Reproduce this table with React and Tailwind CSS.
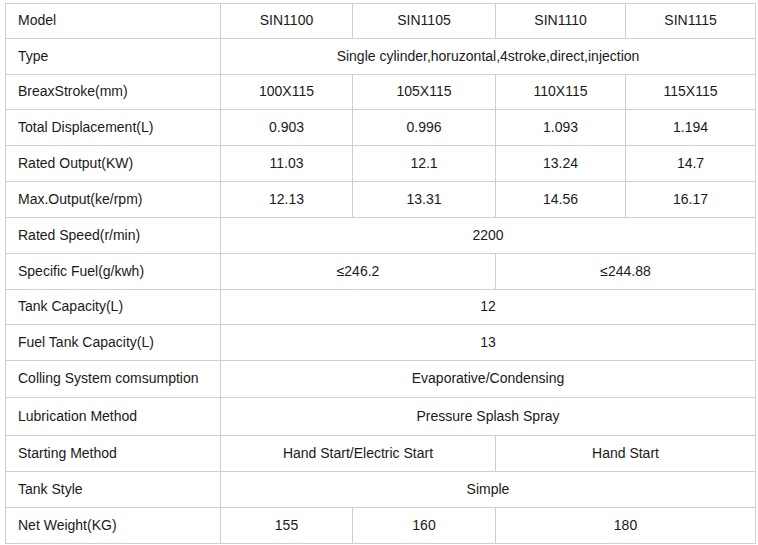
import React from "react";

const rows = [
  { h: 35, cells: [["Model"], ["SIN1100"], ["SIN1105"], ["SIN1110"], ["SIN1115"]] },
  { h: 36, cells: [["Type"], ["Single cylinder,horuzontal,4stroke,direct,injection", 4]] },
  { h: 35, cells: [["BreaxStroke(mm)"], ["100X115"], ["105X115"], ["110X115"], ["115X115"]] },
  { h: 36, cells: [["Total Displacement(L)"], ["0.903"], ["0.996"], ["1.093"], ["1.194"]] },
  { h: 36, cells: [["Rated Output(KW)"], ["11.03"], ["12.1"], ["13.24"], ["14.7"]] },
  { h: 36, cells: [["Max.Output(ke/rpm)"], ["12.13"], ["13.31"], ["14.56"], ["16.17"]] },
  { h: 36, cells: [["Rated Speed(r/min)"], ["2200", 4]] },
  { h: 36, cells: [["Specific Fuel(g/kwh)"], ["≤246.2", 2], ["≤244.88", 2]] },
  { h: 35, cells: [["Tank Capacity(L)"], ["12", 4]] },
  { h: 36, cells: [["Fuel Tank Capacity(L)"], ["13", 4]] },
  { h: 37, cells: [["Colling System comsumption"], ["Evaporative/Condensing", 4]] },
  { h: 38, cells: [["Lubrication Method"], ["Pressure Splash Spray", 4]] },
  { h: 36, cells: [["Starting Method"], ["Hand Start/Electric Start", 2], ["Hand Start", 2]] },
  { h: 36, cells: [["Tank Style"], ["Simple", 4]] },
  { h: 36, cells: [["Net Weight(KG)"], ["155"], ["160"], ["180", 2]] },
];

export default function App() {
  return (
    <div className="bg-white w-[758px] h-[545px] pt-[3px] pl-[5px]" style={{ fontFamily: '"Liberation Sans", Arial, sans-serif' }}>
      <table className="table-fixed border-collapse w-[750px] text-[14px] text-[#1a1a1a]">
        <colgroup>
          <col className="w-[215px]" />
          <col className="w-[132px]" />
          <col className="w-[143px]" />
          <col className="w-[130px]" />
          <col className="w-[130px]" />
        </colgroup>
        <tbody>
          {rows.map((r, i) => (
            <tr key={i} style={{ height: r.h }}>
              {r.cells.map(([t, span], j) => (
                <td
                  key={j}
                  colSpan={span || 1}
                  className={
                    "border border-[#cfcfcf] p-0 pb-[2px] align-middle leading-[16px] " +
                    (j === 0 ? "text-left pl-[12px]" : "text-center")
                  }
                >
                  {t}
                </td>
              ))}
            </tr>
          ))}
        </tbody>
      </table>
    </div>
  );
}
